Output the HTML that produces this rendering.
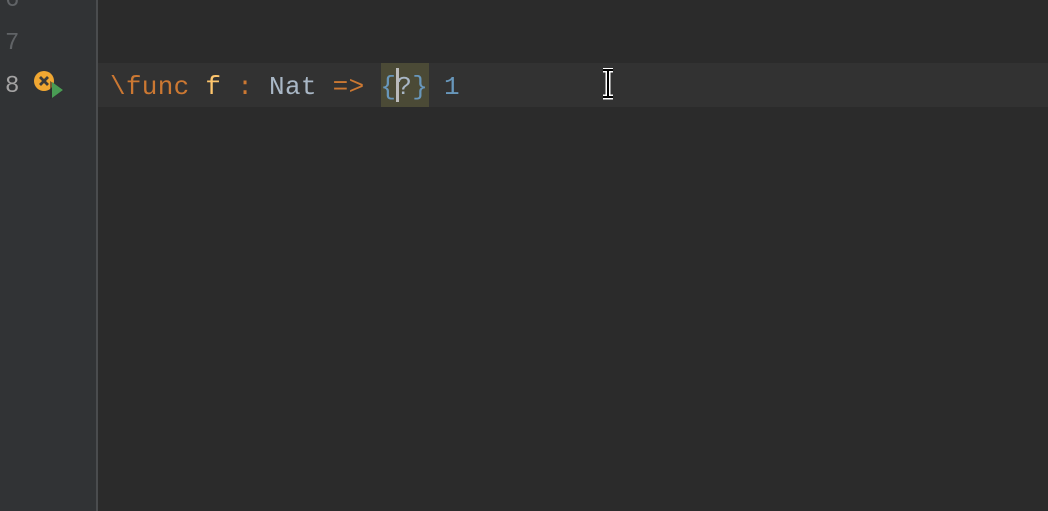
<!DOCTYPE html>
<html><head><meta charset="utf-8"><style>
html,body{margin:0;padding:0;width:1048px;height:511px;overflow:hidden;background:#2b2b2b}
.g{position:absolute;left:0;top:0;width:97px;height:511px;background:#313335}
.sep{position:absolute;left:96px;top:0;width:2px;height:511px;background:#4a4c4e}
.cl{position:absolute;left:98px;top:63px;width:950px;height:44px;background:#323232}
.ln{position:absolute;left:5px;font:24px "Liberation Mono",monospace;color:#606366}
.code{position:absolute;left:110px;top:71px;font:26px/32px "Liberation Mono",monospace;letter-spacing:0.3px;white-space:pre;color:#a9b7c6}
.k{color:#cc7832}.f{color:#ffc66d}.n{color:#6897bb}.t{color:#a9b7c6}
.hl{position:absolute;left:381px;top:63px;width:48px;height:44px;background:#4b4a36}
.caret{position:absolute;left:396px;top:68px;width:3px;height:34px;background:#bbbbbb}
</style></head><body>
<div class="g"></div><div class="sep"></div><div class="cl"></div>
<div class="ln" style="top:-13px">6</div>
<div class="ln" style="top:30px">7</div>
<div class="ln" style="top:73px;color:#a4a3a3">8</div>
<svg style="position:absolute;left:33px;top:70px" width="32" height="30" viewBox="0 0 32 30">
<circle cx="11" cy="11" r="10" fill="#f0a732"/>
<path d="M7 7L15 15M15 7L7 15" stroke="#3a3a3a" stroke-width="2.8"/>
<path d="M17 11L31 20L17 29Z" fill="#2b2b2b" opacity="0.6"/>
<path d="M19 12L30 20L19 28Z" fill="#499c54"/>
</svg>
<div class="hl"></div>
<div class="code"><span class="k">\func</span> <span class="f">f</span> <span class="k">:</span> <span class="t">Nat</span> <span class="k">=&gt;</span> <span class="n">{</span><span class="t">?</span><span class="n">}</span> <span class="n">1</span></div>
<div class="caret"></div>
<svg style="position:absolute;left:600px;top:68px" width="16" height="32" viewBox="0 0 16 32">
<path d="M3 2H13M3 29H13M8 2V29" stroke="#fff" stroke-width="5"/>
<path d="M3 2H13M3 29H13M8 2V29" stroke="#000" stroke-width="2"/>
</svg>
</body></html>
